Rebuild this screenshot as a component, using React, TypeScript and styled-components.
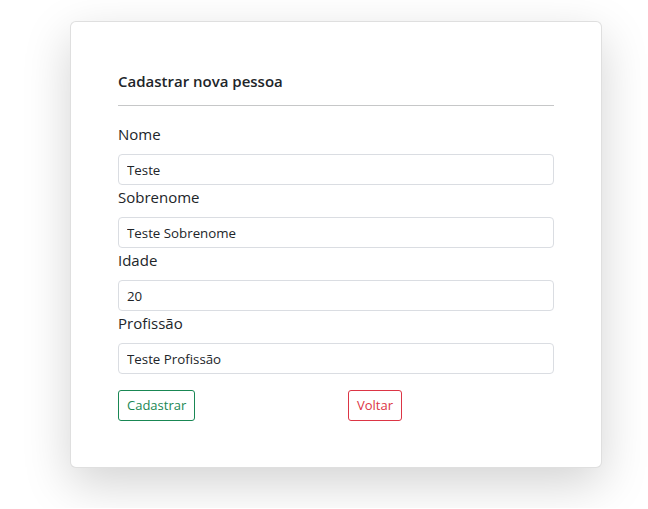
import React from "react";
import styled, { createGlobalStyle } from "styled-components";

const Global = createGlobalStyle`
  html, body { margin: 0; padding: 0; background: #fff; }
  body {
    font-family: "Open Sans", "Noto Sans", "Liberation Sans", sans-serif;
    color: #212529;
  }
  * { box-sizing: border-box; }
`;

const Page = styled.div`
  padding: 21px 0 40px 70px;
`;

const Card = styled.div`
  width: 532px;
  background: #fff;
  border: 1px solid rgba(0, 0, 0, 0.125);
  border-radius: 6px;
  box-shadow: 0 16px 48px rgba(0, 0, 0, 0.175);
  padding: 47px 47px 46px;
`;

const Title = styled.h5`
  margin: 0;
  font-size: 15px;
  font-weight: 600;
  line-height: 24px;
`;

const Rule = styled.hr`
  margin: 12px 0 16px;
  border: 0;
  border-top: 1px solid #c6c7c8;
`;

const Field = styled.div`
  display: flex;
  flex-direction: column;
`;

const Label = styled.label`
  font-size: 15px;
  line-height: 24px;
  margin-bottom: 8px;
`;

const Input = styled.input`
  height: 31px;
  width: 100%;
  padding: 4px 8px;
  font-family: inherit;
  font-size: 13.3px;
  color: #212529;
  border: 1px solid #dadde2;
  border-radius: 4px;
  outline: none;
`;

const Actions = styled.div`
  display: grid;
  grid-template-columns: 1fr 1fr;
  column-gap: 12px;
  margin-top: 16px;
  margin-right: -12px;
`;

const Cell = styled.div`
  display: flex;
`;

const Button = styled.button<{ $tone: string }>`
  height: 31px;
  padding: 4px 8px;
  font-family: inherit;
  font-size: 13px;
  line-height: 21px;
  background: #fff;
  color: ${(p) => p.$tone};
  border: 1px solid ${(p) => p.$tone};
  border-radius: 3px;
`;

const fields = [
  ["Nome", "Teste"],
  ["Sobrenome", "Teste Sobrenome"],
  ["Idade", "20"],
  ["Profissão", "Teste Profissão"],
];

export default function App() {
  return (
    <Page>
      <Global />
      <Card>
        <Title>Cadastrar nova pessoa</Title>
        <Rule />
        {fields.map(([l, v]) => (
          <Field key={l}>
            <Label>{l}</Label>
            <Input defaultValue={v} />
          </Field>
        ))}
        <Actions>
          <Cell>
            <Button $tone="#198754">Cadastrar</Button>
          </Cell>
          <Cell>
            <Button $tone="#dc3545">Voltar</Button>
          </Cell>
        </Actions>
      </Card>
    </Page>
  );
}
